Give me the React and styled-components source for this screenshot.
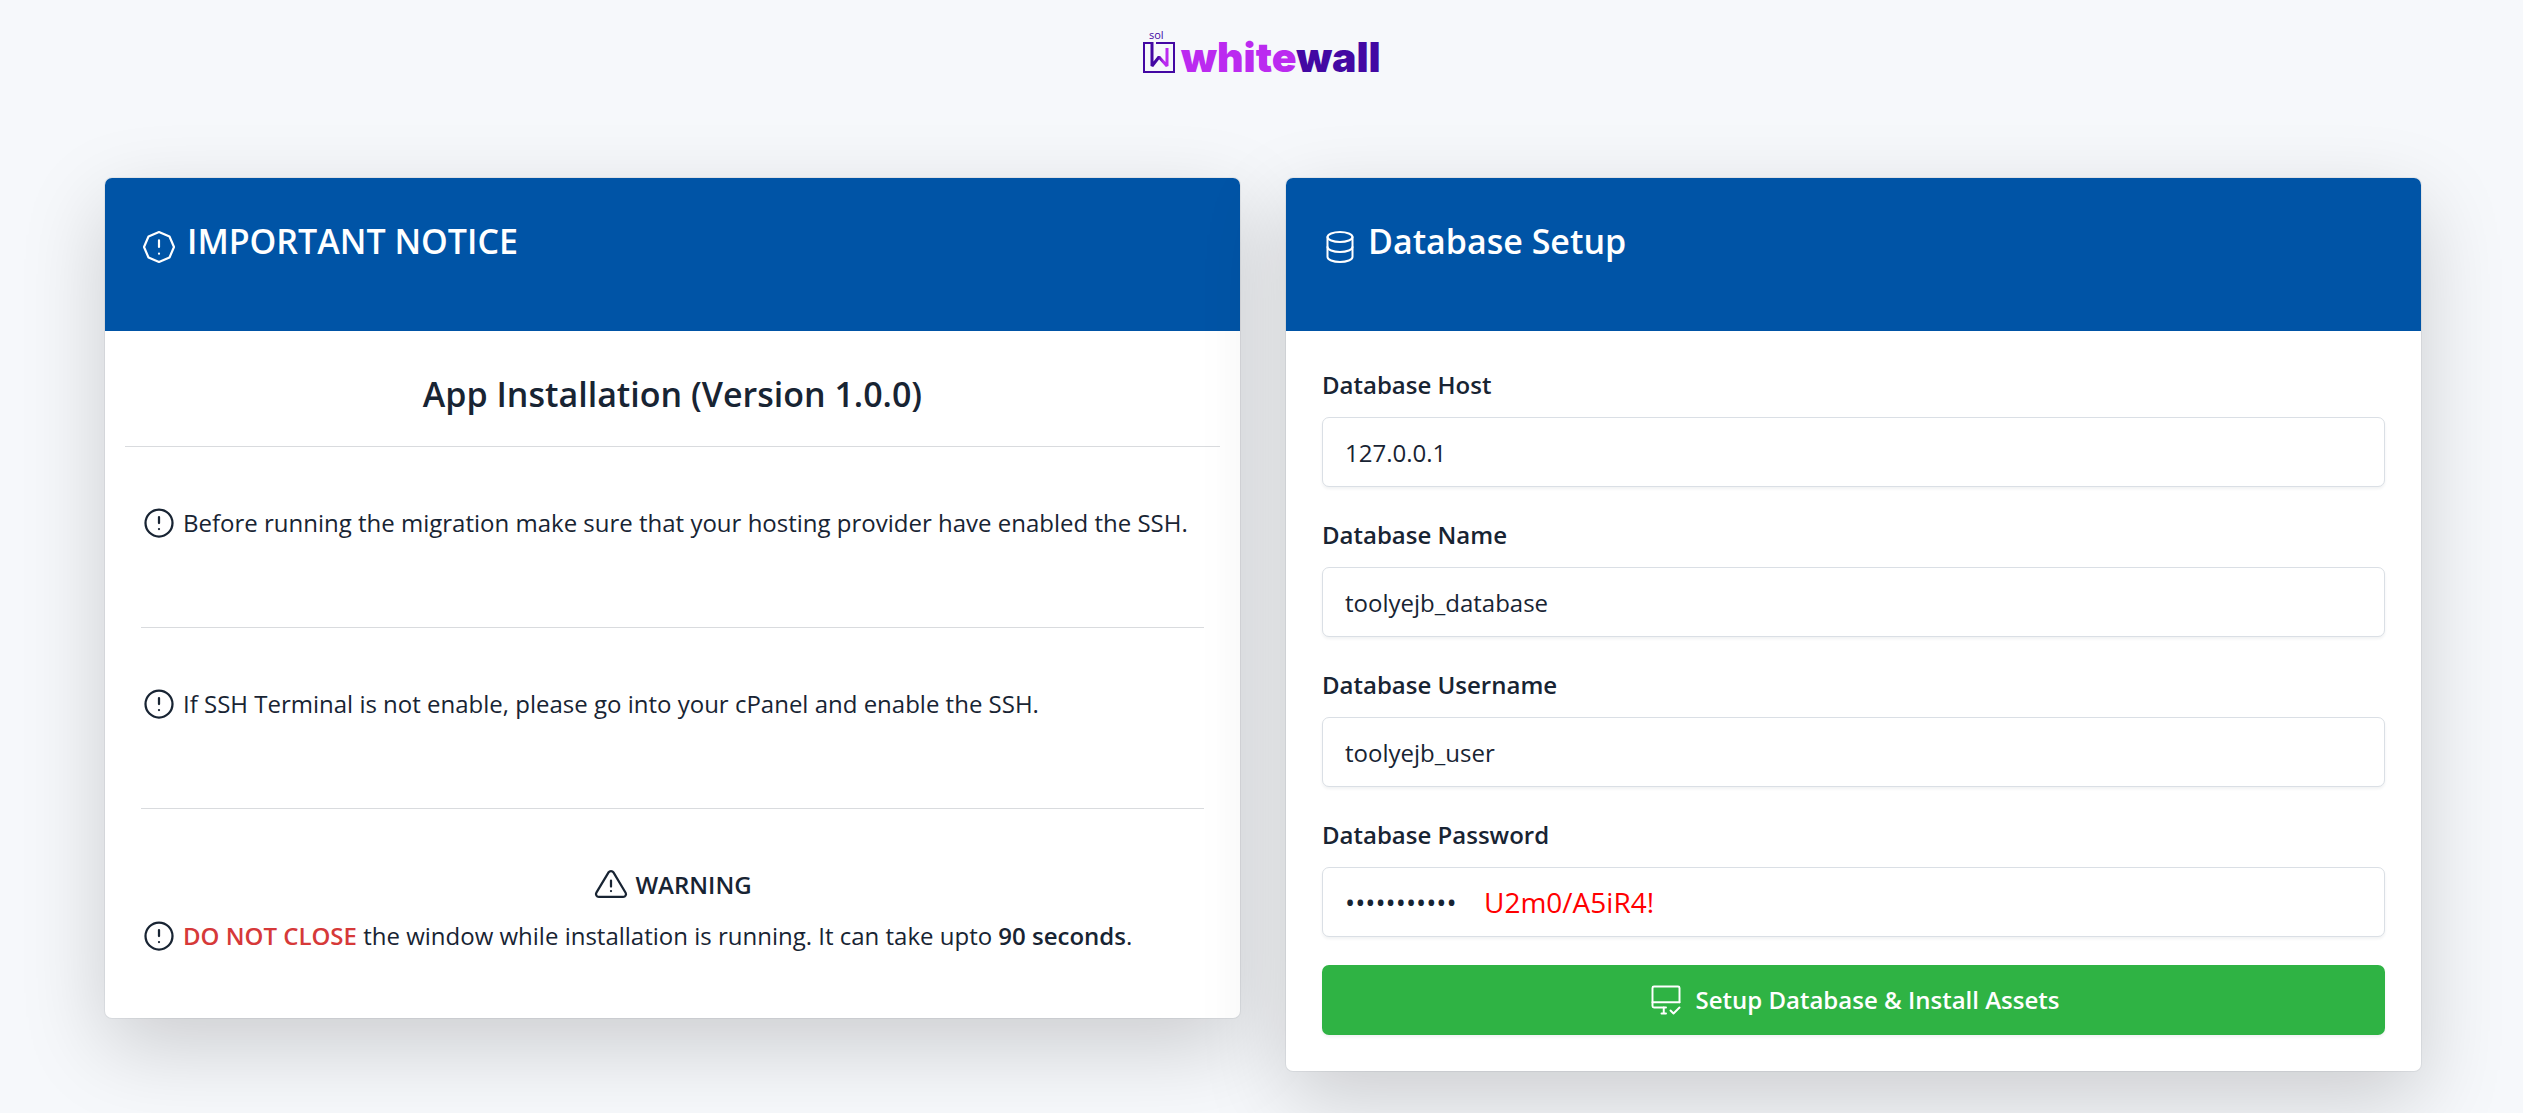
import React from 'react'
import styled, { createGlobalStyle } from 'styled-components';

const GlobalStyle = createGlobalStyle`
    * {
        box-sizing: border-box;
    }

    body {
        margin: 0;
        background: #f6f8fb;
        color: #182433;
        font-family: "Open Sans", "Noto Sans", sans-serif;
        font-size: 24px;
        line-height: 36px;
    }
`;

const Page = styled.div`
    min-height: 100vh;
    overflow: hidden;
    padding: 28px 102px 42px 105px;
`;

const Brand = styled.header`
    display: flex;
    justify-content: center;
    height: 150px;
`;

const BrandLink = styled.a`
    display: block;
`;

const Columns = styled.main`
    display: grid;
    grid-template-columns: 1fr 1fr;
    align-items: start;
    gap: 46px;
`;

const Card = styled.section`
    border-radius: 7px;
    background: #fff;
    box-shadow: 0 28px 84px rgba(0, 0, 0, 0.175), 0 0 0 1px rgba(24, 36, 51, 0.06);
`;

const CardHeader = styled.div`
    display: flex;
    align-items: flex-start;
    gap: 8px;
    height: 153px;
    padding: 40px 34px;
    border-radius: 7px 7px 0 0;
    background: #0054a6;
    color: #fff;
`;

const CardTitle = styled.h2`
    margin: 0;
    font-size: 34px;
    font-weight: 600;
    line-height: 46px;
`;

const HeaderIcon = styled.span`
    display: flex;
    padding-top: 9px;
`;

const NoticeTitle = styled.h3`
    margin: 0 20px;
    padding: 40px 0 29px;
    border-bottom: 1px solid #d9dbde;
    font-size: 34px;
    font-weight: 600;
    line-height: 46px;
    text-align: center;
`;

const NoticeList = styled.div`
    padding: 0 36px 62px;
`;

const Notice = styled.div`
    height: 181px;
    padding-top: 56px;
    border-bottom: 1px solid #d9dbde;
`;

const NoticeText = styled.p`
    display: flex;
    align-items: center;
    gap: 6px;
    min-height: 40px;
    margin: 0;
`;

const WarningTitle = styled.h4`
    display: flex;
    align-items: center;
    justify-content: center;
    gap: 6px;
    margin: 0 0 11px;
    padding-top: 56px;
    font-size: 24px;
    font-weight: 600;
    line-height: 40px;
`;

const Danger = styled.strong`
    color: #d63939;
    font-weight: 600;
`;

const Strong = styled.strong`
    font-weight: 600;
`;

const Form = styled.form`
    padding: 36px;
`;

const Field = styled.div`
    position: relative;
    margin-bottom: ${props => props.$last ? '28px' : '30px'};
`;

const Label = styled.label`
    display: block;
    margin-bottom: 14px;
    font-weight: 600;
`;

const Input = styled.input`
    display: block;
    width: 100%;
    height: 70px;
    padding: 0 22px;
    border: 1px solid #dadfe5;
    border-radius: 7px;
    background: #fff;
    box-shadow: 0 2px 3px rgba(24, 36, 51, 0.06);
    color: inherit;
    font: inherit;
    font-size: ${props => props.type === 'password' ? '27px' : '24px'};
`;

const PasswordHint = styled.span`
    position: absolute;
    bottom: 17px;
    left: 162px;
    color: #f00;
    font-size: 28px;
`;

const SubmitButton = styled.button`
    display: flex;
    align-items: center;
    justify-content: center;
    gap: 12px;
    width: 100%;
    height: 70px;
    border: 0;
    border-radius: 7px;
    background: #2fb344;
    box-shadow: 0 2px 3px rgba(24, 36, 51, 0.06);
    color: #fff;
    font: inherit;
    font-weight: 600;
`;

const IconSvg = styled.svg`
    flex: none;
    width: ${props => props.$size || 36}px;
    height: ${props => props.$size || 36}px;
    fill: none;
    stroke: currentColor;
    stroke-width: ${props => props.$stroke || 1.5};
    stroke-linecap: round;
    stroke-linejoin: round;
`;

function AlertCircle() {
    return (
        <IconSvg viewBox="0 0 24 24" aria-hidden="true">
            <circle cx="12" cy="12" r="9"/>
            <path d="M12 8v4M12 16h.01"/>
        </IconSvg>
    )
}

function AlertOctagon() {
    return (
        <IconSvg viewBox="0 0 24 24" $size={40} $stroke={1.3} aria-hidden="true">
            <path d="M12 3l6.3 2.700L21 12l-2.700 6.300L12 21l-6.300-2.700L3 12l2.700-6.300z"/>
            <path d="M12 8v4M12 16h.01"/>
        </IconSvg>
    )
}

function AlertTriangle() {
    return (
        <IconSvg viewBox="0 0 24 24" aria-hidden="true">
            <path d="M12 9v4M12 16h.01"/>
            <path d="M10.363 3.591l-8.106 13.534a1.914 1.914 0 0 0 1.636 2.871h16.214a1.914 1.914 0 0 0 1.636-2.87l-8.106-13.536a1.914 1.914 0 0 0-3.274 0z"/>
        </IconSvg>
    )
}

function DatabaseIcon() {
    return (
        <IconSvg viewBox="0 0 24 24" $size={40} $stroke={1.2} aria-hidden="true">
            <ellipse cx="12" cy="6" rx="7.5" ry="3"/>
            <path d="M4.500 6v6a7.500 3 0 0 0 15 0V6"/>
            <path d="M4.500 12v6a7.500 3 0 0 0 15 0v-6"/>
        </IconSvg>
    )
}

function DesktopCheck() {
    return (
        <IconSvg viewBox="0 0 24 24" $stroke={1.3} aria-hidden="true">
            <path d="M12 17H4a1 1 0 0 1-1-1V4a1 1 0 0 1 1-1h16a1 1 0 0 1 1 1v9.500"/>
            <path d="M3 13.500h18M10.500 17v4M9 21h3M15 19l2 2 4-4"/>
        </IconSvg>
    )
}

function Logo() {
    return (
        <svg width="240" height="60" viewBox="0 0 240 60" role="img" aria-label="sol whitewall">
            <defs>
                <linearGradient id="mark" x1="0" y1="0" x2="1" y2="0">
                    <stop offset="0.4" stopColor="#4308a3"/>
                    <stop offset="0.75" stopColor="#bb2af0"/>
                </linearGradient>
            </defs>
            <text x="6" y="11" fill="#4308a3" fontFamily="Open Sans" fontSize="11">sol</text>
            <path d="M13 15h18v29H1V15h9" fill="none" stroke="#4308a3" strokeWidth="2"/>
            <path d="M9 14v24l7-9 8 9V20" fill="none" stroke="url(#mark)" strokeWidth="3" strokeLinejoin="bevel"/>
            <text x="38" y="44" fontFamily="Inter" fontSize="41" fontWeight="900" fill="#bb2af0">
                white<tspan fill="#4308a3">wall</tspan>
            </text>
        </svg>
    )
}

const fields = [
    { id: 'host', label: 'Database Host', value: '127.0.0.1' },
    { id: 'name', label: 'Database Name', value: 'toolyejb_database' },
    { id: 'username', label: 'Database Username', value: 'toolyejb_user' },
];

function ImportantNotice() {
    return (
        <Card>
            <CardHeader>
                <HeaderIcon><AlertOctagon/></HeaderIcon>
                <CardTitle>IMPORTANT NOTICE</CardTitle>
            </CardHeader>
            <NoticeTitle>App Installation (Version 1.0.0)</NoticeTitle>
            <NoticeList>
                <Notice>
                    <NoticeText>
                        <AlertCircle/>
                        <span>Before running the migration make sure that your hosting provider have enabled the SSH.</span>
                    </NoticeText>
                </Notice>
                <Notice>
                    <NoticeText>
                        <AlertCircle/>
                        <span>If SSH Terminal is not enable, please go into your cPanel and enable the SSH.</span>
                    </NoticeText>
                </Notice>
                <WarningTitle><AlertTriangle/>WARNING</WarningTitle>
                <NoticeText>
                    <AlertCircle/>
                    <span>
                        <Danger>DO NOT CLOSE</Danger> the window while installation is running. It can take upto <Strong>90 seconds</Strong>.
                    </span>
                </NoticeText>
            </NoticeList>
        </Card>
    )
}

function DatabaseSetup() {
    return (
        <Card>
            <CardHeader>
                <HeaderIcon><DatabaseIcon/></HeaderIcon>
                <CardTitle>Database Setup</CardTitle>
            </CardHeader>
            <Form onSubmit={e => e.preventDefault()}>
                {fields.map(field => (
                    <Field key={field.id}>
                        <Label htmlFor={field.id}>{field.label}</Label>
                        <Input id={field.id} type="text" defaultValue={field.value}/>
                    </Field>
                ))}
                <Field $last>
                    <Label htmlFor="password">Database Password</Label>
                    <Input id="password" type="password" defaultValue="U2m0/A5iR4!"/>
                    <PasswordHint>U2m0/A5iR4!</PasswordHint>
                </Field>
                <SubmitButton type="submit">
                    <DesktopCheck/>
                    Setup Database &amp; Install Assets
                </SubmitButton>
            </Form>
        </Card>
    )
}

function App() {
    return (
        <>
            <GlobalStyle/>
            <Page>
                <Brand>
                    <BrandLink href="#"><Logo/></BrandLink>
                </Brand>
                <Columns>
                    <ImportantNotice/>
                    <DatabaseSetup/>
                </Columns>
            </Page>
        </>
    )
}

export default App
